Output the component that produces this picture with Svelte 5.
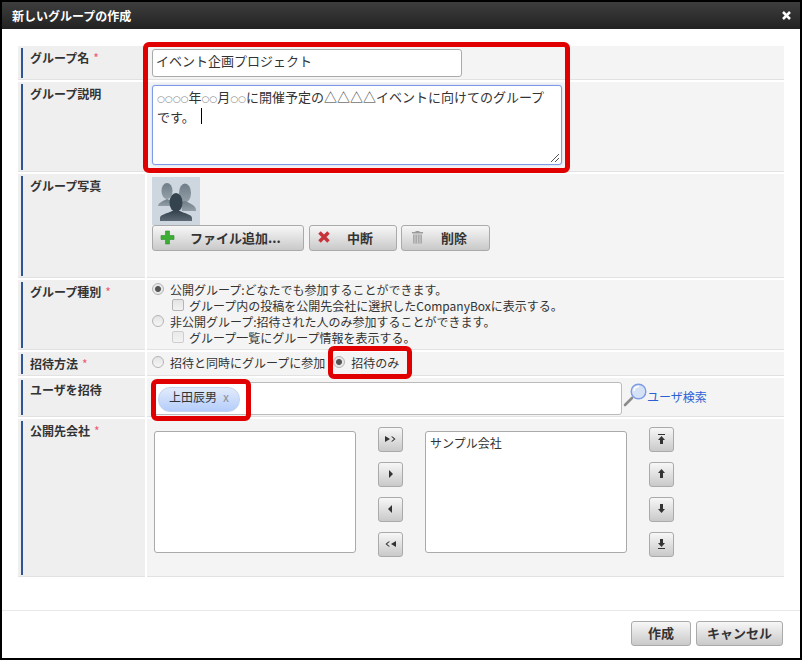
<script>
  const leftMoves = ['allRight', 'right', 'left', 'allLeft'];
  const rightMoves = ['top', 'up', 'down', 'bottom'];
</script>

{#snippet moveIcon(kind)}
  <svg width="13" height="11" viewBox="0 0 13 11" fill="#333">
    {#if kind === 'allRight'}
      <path d="M1 2v6l5-3zM7 2.500l3 2.500-3 2.500h1.500l3-2.500-3-2.500z" />
    {:else if kind === 'right'}
      <path d="M5 1v8l4-4z" />
    {:else if kind === 'left'}
      <path d="M8 1v8l-4-4z" />
    {:else if kind === 'allLeft'}
      <path d="M12 2v6l-5-3zM6 2.500L3 5l3 2.500H4.500l-3-2.500 3-2.500z" />
    {:else if kind === 'top'}
      <path d="M3 0h7v1H3zM6.500 2l3.500 4H8v4H5V6H3z" />
    {:else if kind === 'up'}
      <path d="M6.500 0l3.500 4H8v5H5V4H3z" />
    {:else if kind === 'down'}
      <path d="M5 0h3v5h2L6.500 9 3 5h2z" />
    {:else}
      <path d="M5 0h3v4h2L6.500 8 3 4h2zM3 9h7v1H3z" />
    {/if}
  </svg>
{/snippet}

<div class="dialog">
  <header class="title">
    <span>新しいグループの作成</span>
    <svg class="close" width="9" height="9" viewBox="0 0 9 9">
      <path d="M1 1l7 7M8 1L1 8" stroke="#fff" stroke-width="2.500" />
    </svg>
  </header>

  <div class="body">
    <div class="form">
      <div class="label"><span>グループ名<i>*</i></span></div>
      <div class="value name">
        <div class="field name-input">イベント企画プロジェクト</div>
      </div>

      <div class="label"><span>グループ説明</span></div>
      <div class="value desc">
        <div class="field desc-input">
          <span class="o">○○○○</span>年<span class="o">○○</span>月<span class="o">○○</span>に開催予定の△△△△イベントに向けてのグループ<br />です。<span class="caret"></span>
          <svg class="grip" width="10" height="10" viewBox="0 0 10 10">
            <path d="M1 9l8-8M5 9l4-4" stroke="#555" stroke-width="1" />
          </svg>
        </div>
      </div>

      <div class="label"><span>グループ写真</span></div>
      <div class="value photo">
        <svg class="avatar" width="48" height="48" viewBox="0 0 48 48">
          <defs>
            <linearGradient id="front" x1="0" y1="0" x2="0" y2="1">
              <stop offset="0" stop-color="#35434f" />
              <stop offset="1" stop-color="#5d6a75" />
            </linearGradient>
            <linearGradient id="back" x1="0" y1="0" x2="0" y2="1">
              <stop offset="0" stop-color="#6f7d87" />
              <stop offset="1" stop-color="#939fa8" />
            </linearGradient>
          </defs>
          <rect width="48" height="48" fill="#ced7e0" />
          <g fill="url(#back)">
            <ellipse cx="15" cy="14" rx="5.500" ry="8" />
            <path d="M6 29c0-3 5-5 9-7l5 2v5z" />
            <ellipse cx="33" cy="16" rx="6" ry="9.500" />
            <path d="M28 25l5-1c4 2 11 4 11 9v1H30z" />
          </g>
          <ellipse cx="24" cy="25.500" rx="6.500" ry="9.500" fill="#35434f" />
          <path d="M8 44v-3c0-3 5-4 10-6l2-1h8l2 1c5 2 10 3 10 6v3z" fill="url(#front)" />
        </svg>
        <div class="actions">
          <button class="btn add">
            <svg width="15" height="15" viewBox="0 0 15 15">
              <path d="M5.500 1h4v4.500H14v4H9.500V14h-4V9.500H1v-4h4.500z" fill="#3dae35" stroke="#2b8f2a" stroke-width=".6" />
            </svg>
            <span>ファイル追加...</span>
          </button>
          <button class="btn stop">
            <svg width="14" height="14" viewBox="0 0 14 14">
              <path d="M2.500 2.500l9 9M11.500 2.500l-9 9" stroke="#c8333a" stroke-width="3.500" />
            </svg>
            <span>中断</span>
          </button>
          <button class="btn del">
            <svg width="13" height="14" viewBox="0 0 13 14">
              <path d="M1 2h11v1.500H1zM4.500 1h4v1h-4z" fill="#9a9a9a" />
              <path d="M2 4.500h9V13.500H2z" fill="#a9a9a9" />
              <path d="M4 5v8M6.500 5v8M9 5v8" stroke="#d6d6d6" stroke-width=".8" />
            </svg>
            <span>削除</span>
          </button>
        </div>
      </div>

      <div class="label"><span>グループ種別<i>*</i></span></div>
      <div class="value kinds">
        <div class="opt"><span class="radio on"></span>公開グループ:どなたでも参加することができます。</div>
        <div class="opt sub"><span class="check"></span>グループ内の投稿を公開先会社に選択したCompanyBoxに表示する。</div>
        <div class="opt"><span class="radio"></span>非公開グループ:招待された人のみ参加することができます。</div>
        <div class="opt sub"><span class="check off"></span>グループ一覧にグループ情報を表示する。</div>
      </div>

      <div class="label"><span>招待方法<i>*</i></span></div>
      <div class="value invite">
        <div class="opt"><span class="radio"></span>招待と同時にグループに参加</div>
        <div class="opt"><span class="radio on"></span>招待のみ</div>
      </div>

      <div class="label"><span>ユーザを招待</span></div>
      <div class="value users">
        <div class="field user-input">
          <span class="chip">上田辰男<b>x</b></span>
        </div>
        <svg class="lens" width="24" height="24" viewBox="0 0 24 24">
          <path d="M9 15L2 22" stroke="#8b8b8b" stroke-width="2.600" stroke-linecap="round" />
          <circle cx="15.500" cy="8.500" r="7.300" fill="#d5e1f5" stroke="#7c9be6" stroke-width="1.400" />
          <path d="M11 8c0-3 2-4.500 5-4.500" stroke="#fff" stroke-width="1.500" fill="none" />
        </svg>
        <span class="link">ユーザ検索</span>
      </div>

      <div class="label"><span>公開先会社<i>*</i></span></div>
      <div class="value picker">
        <div class="list"></div>
        <div class="moves">
          {#each leftMoves as kind}
            <button class="btn move">{@render moveIcon(kind)}</button>
          {/each}
        </div>
        <div class="list">サンプル会社</div>
        <div class="moves">
          {#each rightMoves as kind}
            <button class="btn move">{@render moveIcon(kind)}</button>
          {/each}
        </div>
      </div>
    </div>
  </div>

  <footer class="foot">
    <button class="btn foot-btn create">作成</button>
    <button class="btn foot-btn cancel">キャンセル</button>
  </footer>

  <!-- red annotation frames drawn over the screenshot -->
  <div class="mark mark-a"></div>
  <div class="mark mark-b"></div>
  <div class="mark mark-c"></div>
</div>

<style>
  :global(body) {
    margin: 0;
    background: #000;
  }

  .dialog {
    position: relative;
    box-sizing: border-box;
    width: 802px;
    height: 660px;
    border: 2px solid #000;
    background: #fff;
    display: flex;
    flex-direction: column;
    font-family: "Noto Sans CJK JP", "Liberation Sans", sans-serif;
    font-size: 12px;
    color: #333;
  }

  .title {
    height: 27px;
    flex: none;
    display: flex;
    align-items: center;
    justify-content: space-between;
    padding: 0 9px 0 10px;
    background: linear-gradient(#3e3e3e, #222);
    color: #fff;
    font-weight: 700;
  }

  .body {
    flex: 1;
    padding: 17px 0 0 16px;
  }

  .form {
    display: grid;
    grid-template-columns: 127px 637px;
    grid-template-rows: 34px 90px 104px 70px 24px 39px 158px;
    column-gap: 2px;
    row-gap: 2px;
  }

  .label {
    box-sizing: border-box;
    background: #efefef;
    border-bottom: 1px solid #e2e2e2;
    padding: 2px 0 1px 3px;
    font-weight: 700;
  }

  .label span {
    display: block;
    height: 100%;
    box-sizing: border-box;
    border-left: 2px solid #2f5597;
    padding-left: 7px;
    line-height: 20px;
  }

  .label i {
    color: #ee5a6f;
    font-style: normal;
    margin-left: 4px;
    font-weight: 400;
  }

  .value {
    box-sizing: border-box;
    background: #f4f4f4;
    border-bottom: 1px solid #e2e2e2;
    padding-left: 5px;
  }

  .field {
    box-sizing: border-box;
    background: #fff;
    border: 1px solid #bbb;
    border-radius: 3px;
  }

  .name {
    padding-top: 3px;
  }

  .name-input {
    width: 310px;
    height: 28px;
    padding-left: 3px;
    font-size: 13px;
    line-height: 22px;
    border-color: #aaa;
  }

  .desc {
    padding-top: 3px;
  }

  .desc-input {
    position: relative;
    width: 410px;
    height: 80px;
    padding: 2px 4px;
    font-size: 13px;
    line-height: 18px;
    border-color: #7e9be6;
    box-shadow: 0 0 2px #b5c6f0;
  }

  .o {
    font-family: "DejaVu Sans", sans-serif;
    font-size: 9px;
    color: #8a8a8a;
  }

  .caret {
    display: inline-block;
    width: 1px;
    height: 16px;
    margin-left: 6px;
    background: #000;
    vertical-align: -2px;
  }

  .grip {
    position: absolute;
    right: 1px;
    bottom: 1px;
  }

  .photo {
    padding-top: 3px;
  }

  .avatar {
    display: block;
  }

  .actions {
    display: flex;
    gap: 5px;
  }

  .btn {
    box-sizing: border-box;
    height: 26px;
    padding: 0 0 2px;
    display: flex;
    align-items: center;
    border: 1px solid #aaa;
    border-radius: 3px;
    background: linear-gradient(#f7f7f7, #c9c9c9);
    font: 700 13px "Noto Sans CJK JP", sans-serif;
    color: #333;
  }

  .add {
    width: 152px;
    padding-left: 7px;
  }

  .add span {
    margin-left: 15px;
  }

  .stop {
    width: 88px;
    padding-left: 7px;
  }

  .stop span {
    margin-left: 16px;
  }

  .del {
    width: 89px;
    margin-left: -1px;
    padding-left: 9px;
  }

  .del span {
    margin-left: 17px;
  }

  .kinds {
    padding-top: 1px;
  }

  .opt {
    display: flex;
    align-items: center;
    height: 16px;
    white-space: nowrap;
  }

  .sub {
    padding-left: 20px;
  }

  .radio {
    box-sizing: border-box;
    width: 12px;
    height: 12px;
    margin-right: 6px;
    border: 1px solid #b5b5b5;
    border-radius: 50%;
    background: linear-gradient(#e4e4e4, #f6f6f6);
    flex: none;
  }

  .radio.on {
    background: radial-gradient(circle, #555 0 2.500px, #e8e8e8 3.500px);
  }

  .check {
    box-sizing: border-box;
    width: 12px;
    height: 12px;
    margin-right: 5px;
    border: 1px solid #b5b5b5;
    border-radius: 2px;
    background: linear-gradient(#e4e4e4, #f2f2f2);
    flex: none;
  }

  .check.off {
    opacity: .6;
  }

  .invite {
    display: flex;
    gap: 8px;
    align-items: center;
    padding-bottom: 3px;
  }

  .users {
    display: flex;
    align-items: flex-start;
    padding-top: 4px;
  }

  .user-input {
    width: 470px;
    height: 33px;
    padding: 4px 0 0 5px;
  }

  .chip {
    display: inline-flex;
    align-items: center;
    box-sizing: border-box;
    width: 82px;
    height: 25px;
    padding: 0 0 6px 10px;
    border: 1px solid #c3d4ef;
    border-radius: 12px;
    background: linear-gradient(#e2ebfb, #b4cdfa);
  }

  .chip b {
    margin-left: 6px;
    color: #8a8f99;
    font-weight: 400;
  }

  .lens {
    margin: 1px 0 0 1px;
    flex: none;
  }

  .link {
    margin: 6px 0 0 0;
    color: #2a62d6;
  }

  .picker {
    display: flex;
    align-items: flex-start;
    padding: 8px 0 0 7px;
  }

  .list {
    box-sizing: border-box;
    width: 202px;
    height: 122px;
    margin-top: 4px;
    padding: 1px 4px;
    background: #fff;
    border: 1px solid #aaa;
    border-radius: 3px;
    line-height: 20px;
  }

  .moves {
    display: flex;
    flex-direction: column;
    gap: 10px;
    margin: 0 22px;
  }

  .move {
    width: 25px;
    height: 25px;
    padding: 0;
    justify-content: center;
  }

  .foot {
    flex: none;
    box-sizing: border-box;
    height: 48px;
    border-top: 1px solid #e8e8e8;
    display: flex;
    justify-content: flex-end;
    gap: 5px;
    padding: 10px 17px 0 0;
  }

  .foot-btn {
    justify-content: center;
    height: 25px;
  }

  .create {
    width: 60px;
  }

  .cancel {
    width: 87px;
  }

  .mark {
    position: absolute;
    box-sizing: border-box;
    border: 5px solid #e00000;
    border-radius: 6px;
  }

  .mark-a {
    left: 141px;
    top: 40px;
    width: 427px;
    height: 131px;
  }

  .mark-b {
    left: 326px;
    top: 344px;
    width: 84px;
    height: 33px;
  }

  .mark-c {
    left: 149px;
    top: 377px;
    width: 100px;
    height: 42px;
  }
</style>
